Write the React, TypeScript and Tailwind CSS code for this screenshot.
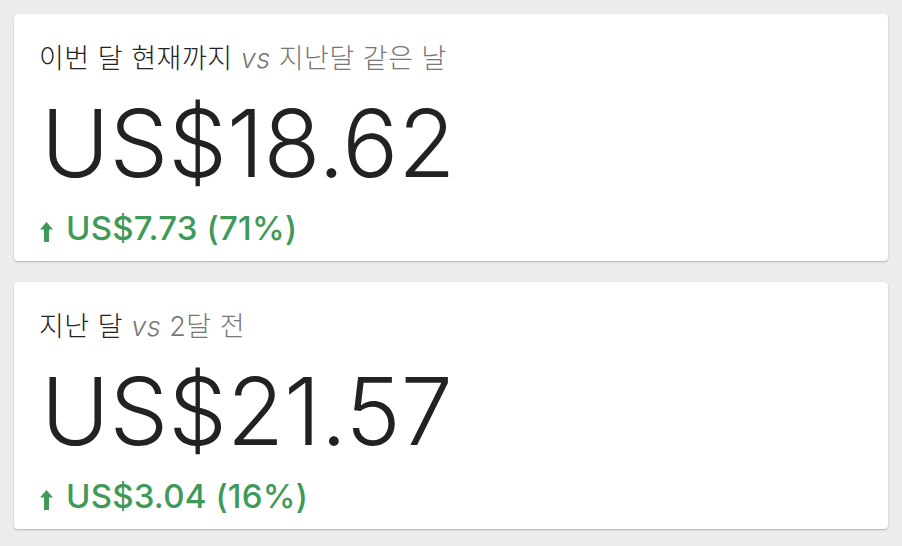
type Stat = {
  title: string
  compare: string
  value: string
  delta: string
}

const stats: Stat[] = [
  { title: "이번 달 현재까지", compare: "지난달 같은 날", value: "US$18.62", delta: "US$7.73 (71%)" },
  { title: "지난 달", compare: "2달 전", value: "US$21.57", delta: "US$3.04 (16%)" },
]

const UpArrow = () => (
  <svg width="13" height="20" viewBox="0 0 13 20" className="mr-[13px] mt-[7px] shrink-0">
    <polygon points="6.5,0 13,7.5 9,7.5 9,20 4,20 4,7.5 0,7.5" fill="currentColor" />
  </svg>
)

const StatCard = ({ stat }: { stat: Stat }) => {
  return (
    <div className="bg-white rounded-[4px] shadow-[0_1px_2px_rgba(0,0,0,0.25)] h-[247px] pl-[25px] pt-[27px]">
      <div className="text-[27px] leading-[36px] tracking-[0.5px] font-light text-[#222]">
        {stat.title} <span className="italic text-[#777]">vs</span>{" "}
        <span className="text-[#777]">{stat.compare}</span>
      </div>
      <div className="text-[93px] leading-[100px] font-light text-[#222] mt-[16px] ml-[2px]">
        {stat.value}
      </div>
      <div className="flex items-center mt-[15px] text-[#3f9a59] text-[33px] font-medium leading-[40px] ml-[1px] tracking-[0.2px]">
        <UpArrow />
        {stat.delta}
      </div>
    </div>
  )
}

const App = () => {
  return (
    <div
      className="w-[902px] h-[546px] bg-[#ececec] px-[14px] pt-[14px] flex flex-col gap-[21px]"
      style={{ fontFamily: "Inter, 'Noto Sans CJK KR', sans-serif" }}
    >
      {stats.map((s) => (
        <StatCard key={s.title} stat={s} />
      ))}
    </div>
  )
}

export default App
